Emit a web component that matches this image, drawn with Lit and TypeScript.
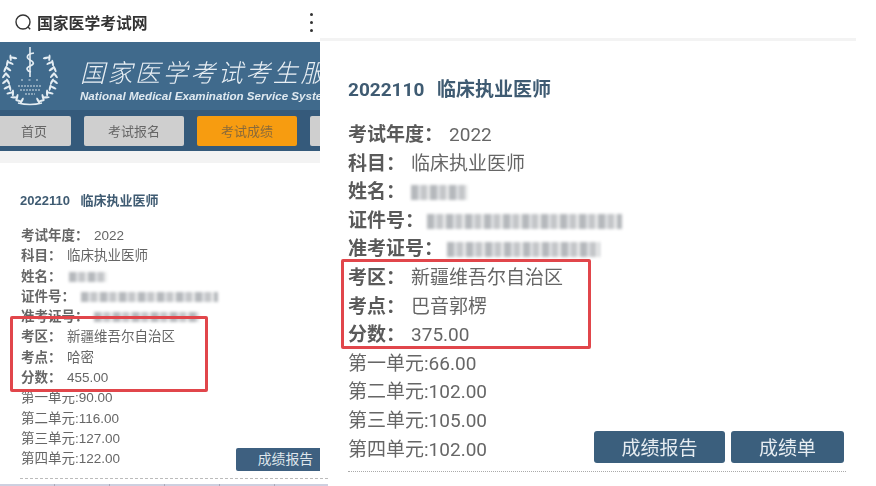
import { LitElement, html, css, svg } from "lit";
import { customElement } from "lit/decorators.js";

const leaves = (side: number) => {
  const out = [];
  for (let i = 0; i < 9; i++) {
    const deg = 138 + (i / 8) * 108;
    const a = (deg * Math.PI) / 180;
    const cx = 27 + side * -1 * 24 * Math.cos(a) * -1;
    const cy = 30 - 27 * Math.sin(a);
    const tangent = 180 - deg;
    const s = side < 0 ? 1 : -1;
    for (const [tilt, off] of [[-38, 1.6], [38, -1.6]]) {
      const x = cx + side * -1 * off * -1 * -1 * 1;
      out.push(svg`<ellipse cx=${x.toFixed(1)} cy=${cy.toFixed(1)} rx="1.1" ry="3.4" fill="#e4edf3" transform="rotate(${s * (tangent + tilt)} ${x.toFixed(1)} ${cy.toFixed(1)})"></ellipse>`);
    }
  }
  return out;
};

@customElement("app-root")
export class AppRoot extends LitElement {
  static styles = css`
    :host { display: block; width: 876px; height: 486px; overflow: hidden; background: #fff;
      font-family: "Liberation Sans", "Noto Sans CJK SC", sans-serif; }
    .page { display: flex; height: 486px; }
    .left { width: 320px; flex: none; position: relative; filter: blur(0.35px); }
    .top { height: 42px; display: flex; align-items: center; padding: 3px 5px 0 15px; box-sizing: border-box; gap: 5px; }
    .top b { font-size: 15.8px; color: #333; font-family: "Noto Sans CJK SC", sans-serif; flex: 1; line-height: 1; }
    .kebab { display: flex; flex-direction: column; gap: 5px; margin-right: 2px; }
    .kebab i { width: 3px; height: 3px; border-radius: 50%; background: #333; display: block; }
    .banner { height: 68px; background: #406a8c; display: flex; overflow: hidden; white-space: nowrap; }
    .emblem { flex: none; width: 58px; height: 60px; margin: 4px 21px 0 1px; }
    .brand { padding-top: 14px; color: #e8eff4; min-width: 0; }
    .cn { font-size: 25px; letter-spacing: 2.55px; line-height: 30px; font-style: italic; font-family: "Noto Sans CJK SC", sans-serif; font-weight: 300; }
    .en { font-size: 11.6px; line-height: 13px; font-style: italic; font-weight: bold; margin-top: 3px; color: #dfe9f0; }
    .nav { height: 41px; background: #355a7b; display: flex; gap: 13px; padding-top: 6px; box-sizing: border-box; overflow: hidden; }
    .nav span { flex: none; width: 100px; height: 30px; background: #cfcfcf; border-radius: 2px; color: #666; font-size: 13px; line-height: 30px; text-align: center; font-family: "Noto Sans CJK SC", sans-serif; }
    .nav span.first { width: 74px; margin-left: -3px; }
    .nav span.on { background: #f79c10; color: #8a6a3a; }
    .band { height: 12px; background: #f3f3f3; }
    .lcard { padding: 30px 0 0 21px; }
    .ltitle { font-size: 13px; font-weight: bold; color: #3f5b72; line-height: 16px; margin-left: -1px; word-spacing: 7px; margin-bottom: 17px; }
    .rows { color: #666; }
    .lrows { font-size: 13.5px; line-height: 20.3px; }
    .row { white-space: nowrap; display: flex; align-items: center; }
    .k { font-weight: bold; color: #5a5a5a; }
    .lrows .k { margin-right: 5.5px; color: #666; }
    .lbtn { position: absolute; left: 236px; top: 448px; width: 84px; height: 23px; background: #3e6080; color: #dfe6ec; font-size: 13.8px; line-height: 23px; text-align: right; padding-right: 7px; box-sizing: border-box; border-radius: 2px 0 0 2px; }
    .ldash { position: absolute; left: 20px; top: 478px; width: 308px; border-top: 1px dashed #bbb; }
    .lline { position: absolute; left: 0; top: 484px; width: 328px; height: 2px; background: repeating-linear-gradient(90deg, #cdd0e0 0 54px, #aab 54px 55px); }
    .red { position: absolute; border: 3px solid #e1464b; box-sizing: border-box; border-radius: 2px; }
    .red.a { left: 10px; top: 316px; width: 198px; height: 76px; }
    .red.b { left: 341px; top: 259px; width: 250px; height: 90px; }
    .redact { display: block; background: repeating-linear-gradient(90deg, #b5b8bc 0 7px, #dfe1e3 7px 10px, #c3c5c8 10px 16px, #eceded 16px 19px); filter: blur(1.4px); }
    .lrows .redact { height: 10px; }
    .rrows .redact { height: 15px; }
    .right { flex: none; width: 536px; height: 486px; position: relative; font-family: Roboto, "Noto Sans CJK SC", sans-serif; }
    .rule { height: 3px; background: #f3f3f3; margin-top: 38px; }
    .rcard { padding: 37px 0 0 28px; }
    .rtitle { font-size: 19px; font-weight: bold; color: #3f5b72; line-height: 24px; word-spacing: 8px; margin-bottom: 19px; }
    .rrows { font-size: 19px; line-height: 28.6px; }
    .rrows .k { margin-right: 6px; }
    .btns { position: absolute; left: 274px; top: 431px; display: flex; gap: 6px; }
    .btns span { height: 32px; line-height: 31px; background: #3b5f7d; color: #e6ecf1; font-size: 19px; text-align: center; border-radius: 3px; font-family: "Noto Sans CJK SC", sans-serif; }
    .btns .w1 { width: 131px; }
    .btns .w2 { width: 113px; }
    .rdash { position: absolute; left: 28px; top: 471px; width: 498px; border-top: 1px dotted #aaa; }
  `;

  private row(k: string, v: string) {
    return html`<div class="row"><span class="k">${k}：</span><span>${v}</span></div>`;
  }
  private red(k: string, w: number, ml = 0) {
    return html`<div class="row"><span class="k">${k}：</span><span class="redact" style="width:${w}px;margin-left:${ml}px"></span></div>`;
  }

  render() {
    return html`<div class="page">
      <div class="left">
        <div class="top">
          <svg width="17" height="17" viewBox="0 0 17 17" fill="none" stroke="#333" stroke-width="1.4">
            <circle cx="8" cy="8" r="7"></circle><path d="M12.8 12.8l2.4 2.4"></path>
          </svg>
          <b>国家医学考试网</b>
          <div class="kebab"><i></i><i></i><i></i></div>
        </div>
        <div class="banner">
          <svg class="emblem" viewBox="0 0 54 60">
            ${leaves(-1)}${leaves(1)}
            <path d="M27 1v30" stroke="#e4edf3" stroke-width="1.6"></path>
            <path d="M31 7c-8 1-8 5-4 7s5 4 0 6-3 5 1 6" fill="none" stroke="#e4edf3" stroke-width="1.6"></path>
            <path d="M18 34h3M25.500 34h3M33 34h3M15 40h24M17 44h20M22 48h10" stroke="#d4e0e8" stroke-width="1.2" stroke-dasharray="2 1"></path>
            <path d="M15 57q12 3 24 0" fill="none" stroke="#e4edf3" stroke-width="1.4"></path>
          </svg>
          <div class="brand">
            <div class="cn">国家医学考试考生服务平台</div>
            <div class="en">National Medical Examination Service System</div>
          </div>
        </div>
        <div class="nav">
          <span class="first">首页</span><span>考试报名</span><span class="on">考试成绩</span><span></span>
        </div>
        <div class="band"></div>
        <div class="lcard">
          <div class="ltitle">2022110 临床执业医师</div>
          <div class="rows lrows">
            ${this.row("考试年度", "2022")}
            ${this.row("科目", "临床执业医师")}
            ${this.red("姓名", 38, 2)}
            ${this.red("证件号", 137)}
            ${this.red("准考证号", 105)}
            ${this.row("考区", "新疆维吾尔自治区")}
            ${this.row("考点", "哈密")}
            ${this.row("分数", "455.00")}
            <div class="row">第一单元:90.00</div>
            <div class="row">第二单元:116.00</div>
            <div class="row">第三单元:127.00</div>
            <div class="row">第四单元:122.00</div>
          </div>
        </div>
        <div class="lbtn">成绩报告</div>
        <div class="ldash"></div>
        <div class="lline"></div>
      </div>
      <div class="right">
        <div class="rule"></div>
        <div class="rcard">
          <div class="rtitle">2022110 临床执业医师</div>
          <div class="rows rrows">
            ${this.row("考试年度", "2022")}
            ${this.row("科目", "临床执业医师")}
            ${this.red("姓名", 57)}
            ${this.red("证件号", 195, -3)}
            ${this.red("准考证号", 153, -2)}
            ${this.row("考区", "新疆维吾尔自治区")}
            ${this.row("考点", "巴音郭楞")}
            ${this.row("分数", "375.00")}
            <div class="row">第一单元:66.00</div>
            <div class="row">第二单元:102.00</div>
            <div class="row">第三单元:105.00</div>
            <div class="row">第四单元:102.00</div>
          </div>
        </div>
        <div class="btns"><span class="w1">成绩报告</span><span class="w2">成绩单</span></div>
        <div class="rdash"></div>
      </div>
      <div class="red a"></div>
      <div class="red b"></div>
    </div>`;
  }
}
